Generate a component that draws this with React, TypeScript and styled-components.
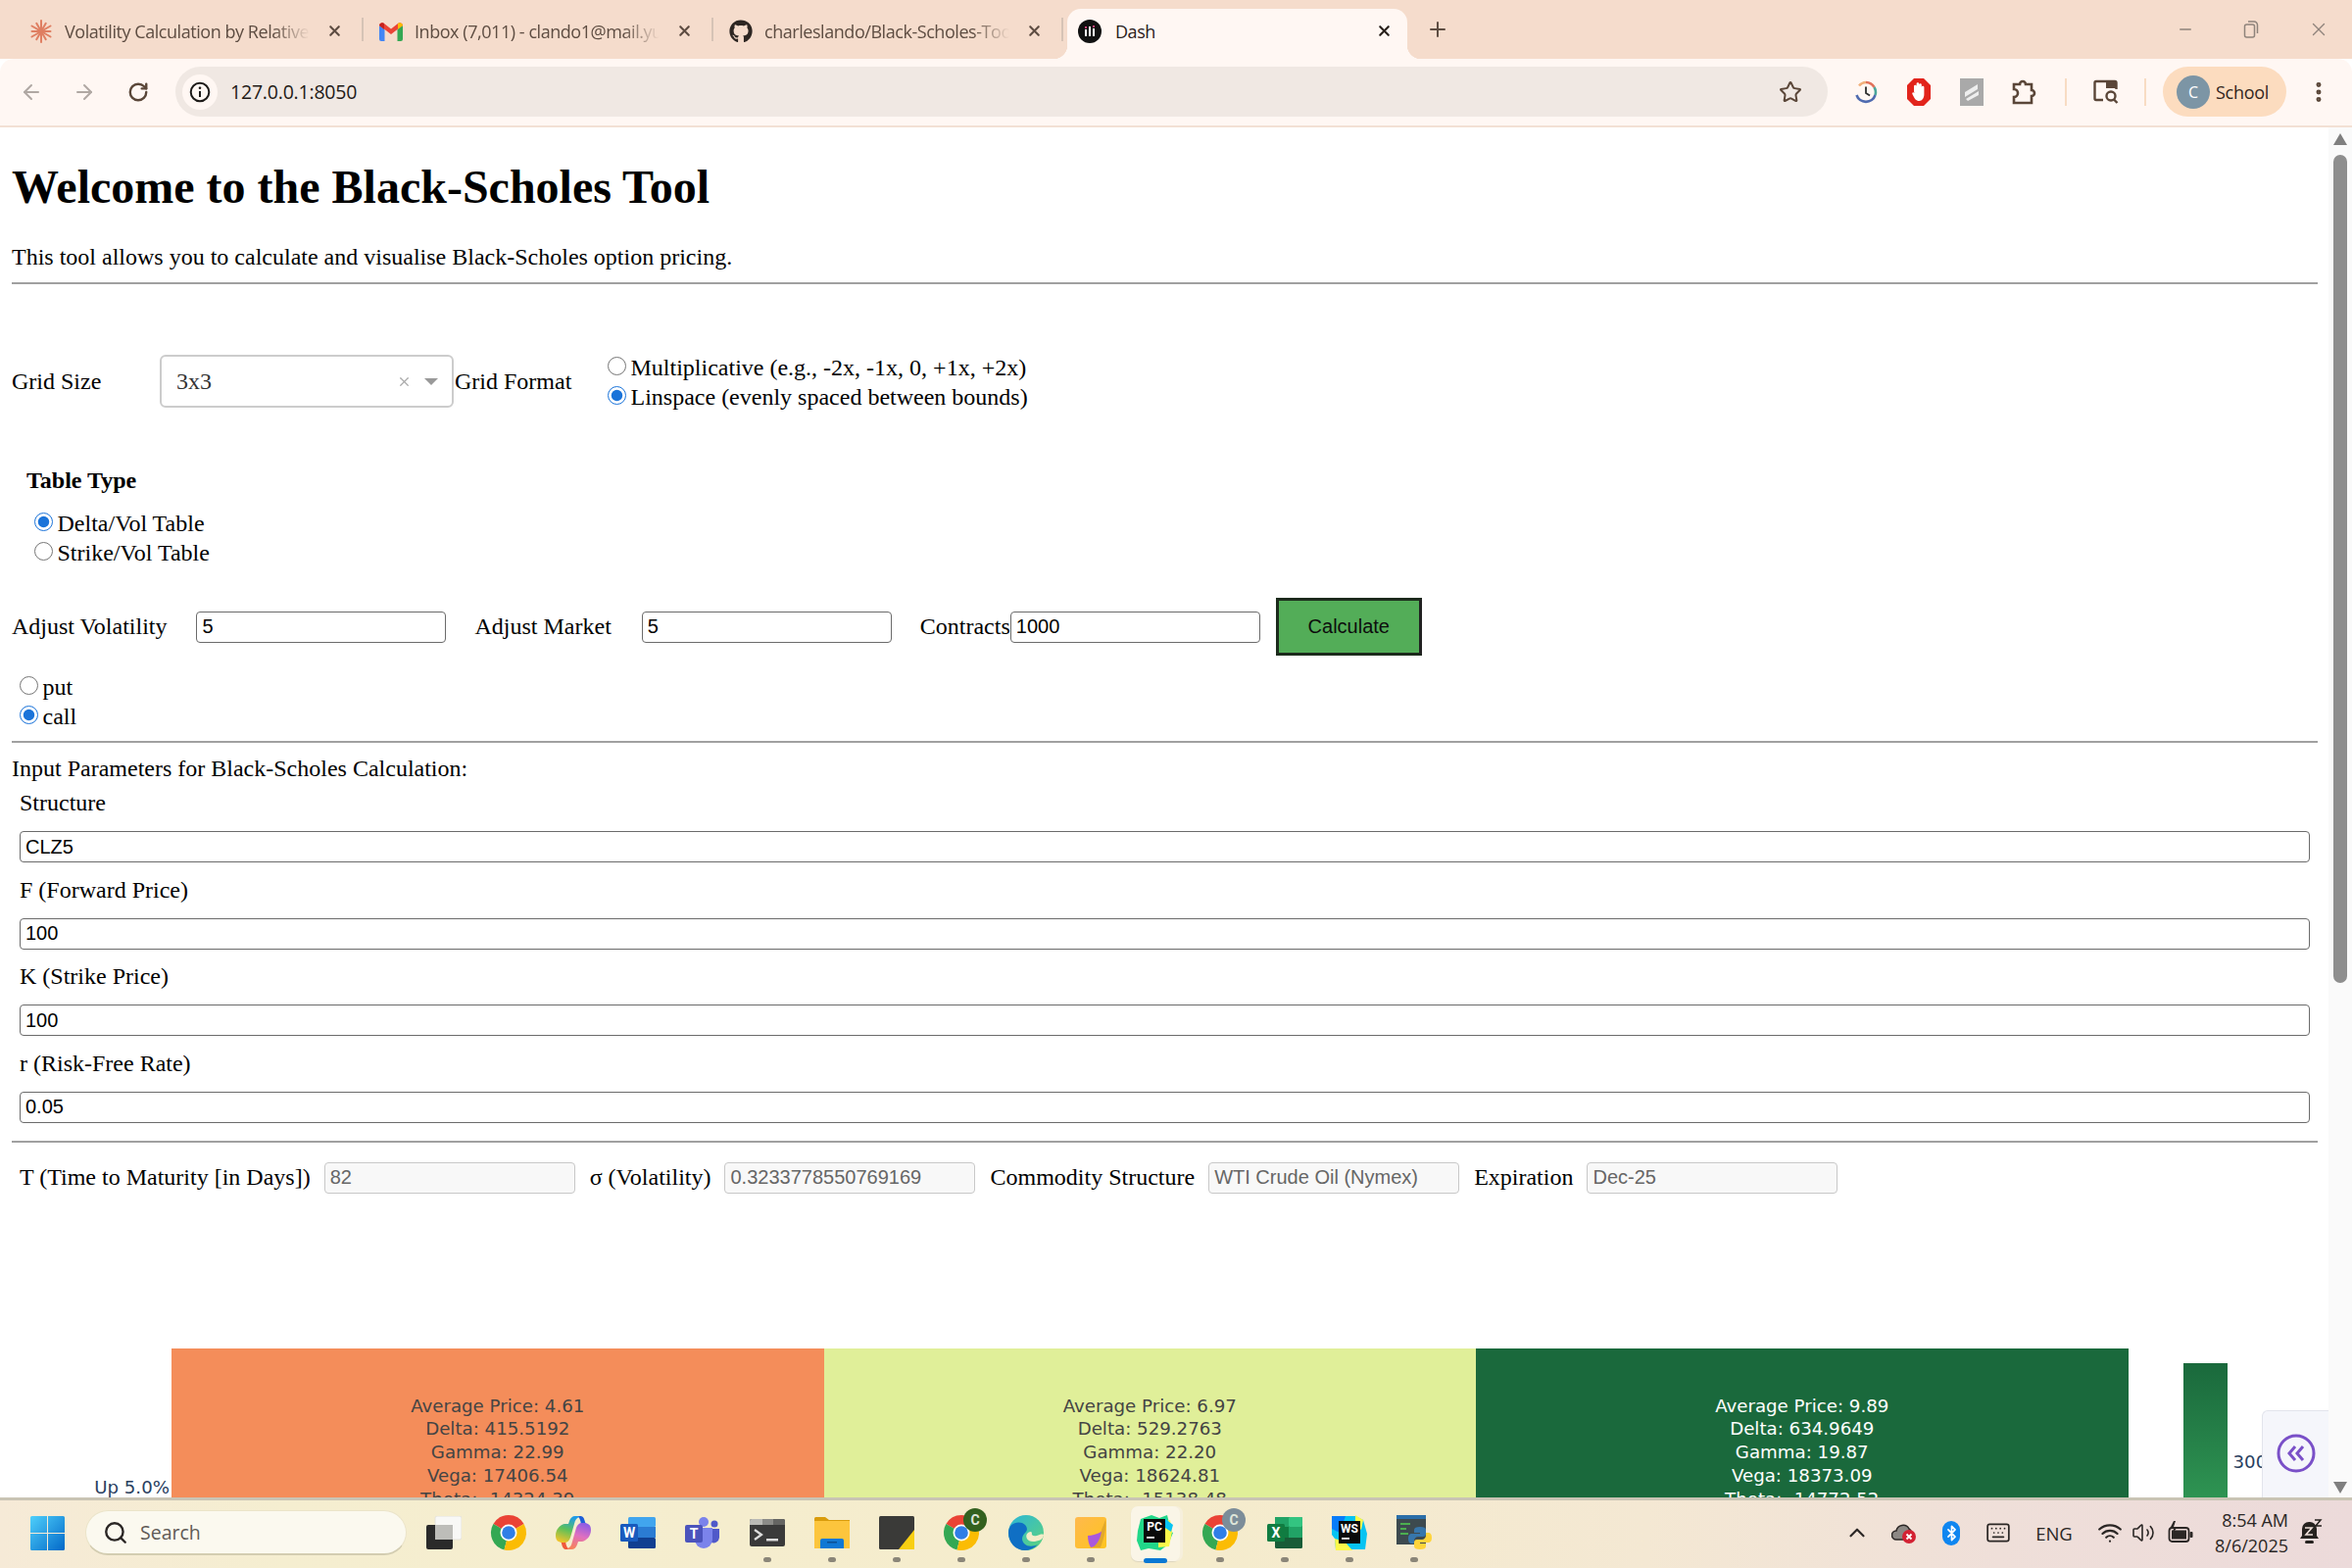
import React from 'react'
import styled, { createGlobalStyle } from 'styled-components'
import {
  ArrowLeft,
  ArrowRight,
  Bluetooth,
  ChevronUp,
  EllipsisVertical,
  Keyboard,
  Minus,
  Plus,
  RotateCw,
  Search,
  Star,
  Volume2,
  Wifi,
  X,
} from 'lucide-react'
import { FaGithub } from 'react-icons/fa'

const GlobalStyle = createGlobalStyle`
  html, body {
    margin: 0;
    padding: 0;
    background: #fff;
  }
  * {
    box-sizing: border-box;
  }
`

const UI_FONT = `"Open Sans", "Noto Sans", sans-serif`
const SERIF = `"Liberation Serif", serif`
const ARIAL = `"Liberation Sans", sans-serif`

const Screen = styled.div`
  width: 2400px;
  height: 1600px;
  display: flex;
  flex-direction: column;
  overflow: hidden;
  background: #fff;
`

/* ---------- browser chrome ---------- */

const TabStrip = styled.div`
  height: 60px;
  flex: none;
  display: flex;
  align-items: flex-end;
  padding-left: 14px;
  background: #f5dccc;
`

const Tab = styled.div<{ $active?: boolean; $divider?: boolean }>`
  position: relative;
  display: flex;
  align-items: center;
  height: ${({ $active }) => ($active ? '51px' : '60px')};
  width: ${({ $active }) => ($active ? '347px' : '357px')};
  margin-left: ${({ $active }) => ($active ? '4px' : '0')};
  padding: ${({ $active }) => ($active ? '0 15px 6px 11px' : '9px 21px 6px 16px')};
  gap: ${({ $active }) => ($active ? '14px' : '12px')};
  font: 18px ${UI_FONT};
  letter-spacing: -0.45px;
  color: ${({ $active }) => ($active ? '#2a211c' : '#5e4d42')};
  background: ${({ $active }) => ($active ? '#fff7f3' : 'transparent')};
  border-radius: 14px 14px 0 0;

  ${({ $divider }) =>
    $divider &&
    `
    &::after {
      content: '';
      position: absolute;
      right: 0;
      top: 18px;
      width: 2px;
      height: 24px;
      background: #d6c3b6;
    }
  `}

  ${({ $active }) =>
    $active &&
    `
    &::before,
    &::after {
      content: '';
      position: absolute;
      bottom: 0;
      width: 14px;
      height: 14px;
    }
    &::before {
      left: -14px;
      background: radial-gradient(circle at 0 0, #f5dccc 14px, #fff7f3 14.5px);
    }
    &::after {
      right: -14px;
      background: radial-gradient(circle at 100% 0, #f5dccc 14px, #fff7f3 14.5px);
    }
  `}
`

const Favicon = styled.span`
  width: 24px;
  height: 24px;
  flex: none;
  display: flex;
  align-items: center;
  justify-content: center;
`

const TabTitle = styled.span<{ $fade?: boolean }>`
  flex: 1;
  min-width: 0;
  white-space: nowrap;
  ${({ $fade }) =>
    $fade &&
    `mask-image: linear-gradient(to right, #000 85%, transparent);`}
`

const TabClose = styled(X)`
  flex: none;
  width: 17px;
  height: 17px;
  margin-left: 5px;
  stroke-width: 3;
`

const NewTab = styled(Plus)`
  width: 24px;
  height: 24px;
  margin: 0 0 18px 19px;
  color: #5e4d42;
  stroke-width: 2;
`

const WindowControls = styled.div`
  margin-left: auto;
  display: flex;
  align-items: center;
  gap: 50px;
  padding: 0 23px 19px 0;
  color: #8f837b;
`

const Toolbar = styled.div`
  height: 70px;
  flex: none;
  display: flex;
  align-items: center;
  background: #fff7f3;
  border-bottom: 2px solid #f3e0d4;
  border-radius: 14px 14px 0 0;
  padding: 0 15px 1px 20px;
  color: #5a4638;
`

const NavButton = styled.span<{ $dim?: boolean }>`
  width: 54px;
  display: flex;
  justify-content: flex-start;
  color: ${({ $dim }) => ($dim ? '#b0a8a3' : '#5a4638')};
`

const ReloadIcon = styled(RotateCw)`
  margin-left: 2px;
`

const Omnibox = styled.div`
  width: 1686px;
  height: 51px;
  flex: none;
  margin-left: -3px;
  display: flex;
  align-items: center;
  padding: 0 26px 0 7px;
  background: #f0e8e3;
  border-radius: 26px;
`

const SiteInfo = styled.span`
  width: 36px;
  height: 36px;
  flex: none;
  display: flex;
  align-items: center;
  justify-content: center;
  background: #fff7f3;
  border-radius: 50%;
`

const Url = styled.span`
  flex: 1;
  margin-left: 13px;
  font: 19.5px ${UI_FONT};
  letter-spacing: -0.2px;
  color: #1f1a17;
`

const Extensions = styled.div`
  display: flex;
  align-items: center;
  margin-left: 12px;
`

const ExtensionSlot = styled.span<{ $width?: number }>`
  width: ${({ $width }) => $width ?? 54}px;
  flex: none;
  display: flex;
  justify-content: center;
`

const ToolbarDivider = styled.span<{ $left?: number }>`
  width: 2px;
  height: 28px;
  flex: none;
  margin-left: ${({ $left }) => $left ?? 0}px;
  background: #f8dcc3;
`

const ProfilePill = styled.div`
  width: 126px;
  height: 51px;
  flex: none;
  margin-left: 17px;
  display: flex;
  align-items: center;
  gap: 6px;
  padding-left: 14px;
  background: #fcdcbf;
  border-radius: 26px;
  font: 18px ${UI_FONT};
  letter-spacing: -0.3px;
  color: #33261d;
`

const Avatar = styled.span`
  width: 34px;
  height: 34px;
  display: flex;
  align-items: center;
  justify-content: center;
  border-radius: 50%;
  background: #7c95a5;
  color: #fff;
  font-size: 16px;
`

const MenuDots = styled(EllipsisVertical)`
  flex: none;
  margin-left: 20px;
  width: 26px;
  height: 26px;
  stroke-width: 2.6;
`

/* ---------- page ---------- */

const Viewport = styled.div`
  position: relative;
  flex: 1;
  min-height: 0;
  display: flex;
  overflow: hidden;
`

const Page = styled.main`
  flex: 1;
  min-width: 0;
  padding: 33px 11px 0 12px;
  font: 24px ${SERIF};
  color: #000;
`

const Title = styled.h1`
  margin: 0 0 31px;
  font-size: 48px;
  line-height: 55px;
  font-weight: bold;
`

const Intro = styled.p`
  margin: 0 0 12px;
  line-height: 27px;
`

const Rule = styled.hr`
  margin: 0;
  height: 2px;
  border: none;
  background: #a0a0a0;
`

const GridRow = styled.div`
  display: flex;
  align-items: center;
  height: 60px;
  margin-top: 69px;
`

const GridLabel = styled.span`
  width: 151px;
`

const SelectBox = styled.div`
  width: 300px;
  height: 54px;
  display: flex;
  align-items: center;
  padding: 0 14px 0 15px;
  border: 2px solid #ccc;
  border-radius: 6px;
  color: #333;
  background: #fff;
`

const SelectValue = styled.span`
  flex: 1;
`

const ClearMark = styled(X)`
  width: 15px;
  height: 15px;
  color: #aaa;
  margin-right: 13px;
`

const Caret = styled.span`
  width: 0;
  height: 0;
  border-left: 7px solid transparent;
  border-right: 7px solid transparent;
  border-top: 7px solid #999;
`

const FormatLabel = styled.span`
  margin-left: 1px;
  width: 156px;
`

const RadioList = styled.div<{ $top?: number; $left?: number; $bottom?: number }>`
  display: flex;
  flex-direction: column;
  margin-top: ${({ $top }) => $top ?? 0}px;
  margin-left: ${({ $left }) => $left ?? 0}px;
  margin-bottom: ${({ $bottom }) => $bottom ?? 0}px;
`

const RadioLine = styled.label`
  display: flex;
  align-items: center;
  height: 30px;
  gap: 4.5px;
`

const Radio = styled.input.attrs({ type: 'radio', readOnly: true })`
  width: 19px;
  height: 19px;
  margin: 0 0 4px;
  accent-color: #1a73d9;
`

const SectionHeading = styled.div`
  margin: 57px 0 0 15px;
  font-weight: bold;
  line-height: 28px;
`

const AdjustRow = styled.div`
  display: flex;
  align-items: center;
  margin-top: 31px;
  height: 59px;
`

const FieldLabel = styled.span<{ $gap?: number; $after?: number }>`
  margin-left: ${({ $gap }) => $gap ?? 0}px;
  margin-right: ${({ $after }) => $after ?? 0}px;
  white-space: nowrap;
`

const NumberInput = styled.input.attrs({ readOnly: true })<{ $muted?: boolean }>`
  width: 256px;
  height: 32px;
  flex: none;
  padding: 0 5px;
  font: 20px ${ARIAL};
  border-radius: 4px;
  outline: none;
  border: 1px solid ${({ $muted }) => ($muted ? '#c8c8c8' : '#6b6b6b')};
  background: ${({ $muted }) => ($muted ? '#f8f8f8' : '#fff')};
  color: ${({ $muted }) => ($muted ? '#666' : '#000')};
`

const AdjustInput = styled(NumberInput)`
  width: 255px;
`

const CalculateButton = styled.button`
  width: 149px;
  height: 59px;
  margin-left: 16px;
  background: #53ad58;
  border: 3px solid #1c2b1c;
  border-right-color: #222;
  font: 20px ${ARIAL};
  color: #0d0d0d;
`

const ParamsHeading = styled.div`
  margin-top: 12px;
  line-height: 28px;
`

const ParamBlock = styled.div`
  padding: 0 8px;
  margin: 7px 0 18px;
  display: flex;
  flex-direction: column;
  gap: 13.5px;
`

const ParamEntry = styled.div`
  display: flex;
  flex-direction: column;
  gap: 15px;
`

const ParamLabel = styled.div`
  height: 28px;
  line-height: 28px;
`

const ParamField = styled(NumberInput)`
  width: 100%;
`

const ReadonlyRow = styled.div`
  display: flex;
  align-items: center;
  height: 32px;
  margin-top: 20px;
  padding-left: 8px;
`

/* ---------- heatmap ---------- */

const Heatmap = styled.section`
  display: flex;
  align-items: flex-start;
  margin: 158px 0 0 -12px;
`

const AxisLabel = styled.div`
  width: 175px;
  height: 284px;
  flex: none;
  display: flex;
  align-items: center;
  justify-content: flex-end;
  padding-right: 2px;
  font: 18.2px "DejaVu Sans", sans-serif;
  color: #2a3f5f;
`

const HeatCell = styled.div<{ $bg: string; $fg: string }>`
  width: 665.5px;
  height: 284px;
  flex: none;
  padding-top: 47px;
  background: ${({ $bg }) => $bg};
  color: ${({ $fg }) => $fg};
  font: 18.2px/23.8px "DejaVu Sans", sans-serif;
  text-align: center;
`

const ColorBar = styled.div`
  width: 45px;
  height: 284px;
  flex: none;
  margin: 15px 0 0 56px;
  background: linear-gradient(#1a693c, #2f9553 50%, #5cb066 100%);
`

const ColorBarTick = styled.span`
  margin: 105px 0 0 6px;
  font: 18.2px "DejaVu Sans", sans-serif;
  color: #2a3f5f;
`

const DebugPanel = styled.div`
  position: absolute;
  right: 24px;
  bottom: 0;
  width: 68px;
  height: 89px;
  display: flex;
  align-items: flex-start;
  justify-content: center;
  padding-top: 23px;
  background: #f5f6fb;
  border: 1px solid #e2e4ec;
  border-bottom: none;
  border-right: none;
  border-radius: 6px 0 0 0;
`

const Scrollbar = styled.div`
  position: relative;
  width: 24px;
  flex: none;
  background: #fafafa;
`

const ScrollThumb = styled.div`
  position: absolute;
  top: 28px;
  left: 5px;
  width: 14px;
  height: 845px;
  border-radius: 7px;
  background: #8e8e8e;
`

const ScrollArrow = styled.div<{ $down?: boolean }>`
  position: absolute;
  left: 5px;
  ${({ $down }) => ($down ? 'bottom: 4px;' : 'top: 6px;')}
  width: 0;
  height: 0;
  border-left: 7px solid transparent;
  border-right: 7px solid transparent;
  ${({ $down }) =>
    $down ? 'border-top: 12px solid #7f7f7f;' : 'border-bottom: 12px solid #7f7f7f;'}
`

/* ---------- taskbar ---------- */

const Taskbar = styled.footer`
  height: 72px;
  flex: none;
  display: flex;
  align-items: center;
  border-top: 3px solid #c9c4b4;
  padding-left: 15px;
  background: linear-gradient(90deg, #f6ead7 0%, #f5eed0 12%, #f5eccc 50%, #f4e8d3 70%, #efdfd9 85%, #ecdada 100%);
  font: 18.5px ${UI_FONT};
  color: #2b2725;
`

const TaskSlot = styled.div<{ $running?: boolean; $active?: boolean }>`
  position: relative;
  width: 66px;
  height: 69px;
  flex: none;
  display: flex;
  align-items: center;
  justify-content: center;
  padding-bottom: 3px;

  ${({ $active }) =>
    $active &&
    `
    &::before {
      content: '';
      position: absolute;
      top: 6px;
      left: 8px;
      width: 50px;
      height: 56px;
      border-radius: 7px;
      background: #faf5e7;
      box-shadow: 3px 0 0 #f6efdc, 0 1px 1px #ddd6bf;
    }
  `}

  ${({ $running, $active }) =>
    $running &&
    `
    &::after {
      content: '';
      position: absolute;
      left: 50%;
      bottom: ${$active ? '5px' : '6px'};
      transform: translateX(-50%);
      width: ${$active ? '24px' : '8px'};
      height: 5px;
      border-radius: 3px;
      background: ${$active ? '#0a78d4' : '#8a8578'};
    }
  `}

  & > svg {
    position: relative;
  }
`

const SearchBox = styled.div`
  width: 328px;
  height: 46px;
  flex: none;
  margin: 0 5px 3px 6px;
  display: flex;
  align-items: center;
  gap: 12px;
  padding-left: 17px;
  font-size: 19.5px;
  background: #fbf9ef;
  border: 1px solid #ebe4c9;
  border-bottom: 2px solid #d3cdb1;
  border-radius: 23px;
  color: #5f5b56;
`

const Tray = styled.div`
  margin-left: auto;
  display: flex;
  align-items: center;
  height: 100%;
  padding: 0 19px 3px 0;
`

const TraySlot = styled.span<{ $width: number }>`
  width: ${({ $width }) => $width}px;
  flex: none;
  display: flex;
  align-items: center;
  justify-content: center;
`

const BluetoothBadge = styled.span`
  width: 18px;
  height: 25px;
  display: flex;
  align-items: center;
  justify-content: center;
  border-radius: 9px;
  background: #0f86f0;
  color: #fff;
`

const Clock = styled.div`
  width: 90px;
  flex: none;
  text-align: right;
  white-space: nowrap;
  line-height: 26px;
  font-size: 18px;
`

/* ---------- icons ---------- */

const SparkIcon = () => (
  <svg width="24" height="24" viewBox="0 0 24 24" stroke="#df7f62" strokeWidth="2" strokeLinecap="round">
    {[0, 30, 60, 90, 120, 150, 180, 210, 240, 270, 300, 330].map(a => (
      <line key={a} x1="12" y1="12" x2="12" y2={a % 60 === 0 ? 1 : 2.5} transform={`rotate(${a} 12 12)`} />
    ))}
  </svg>
)

const GmailIcon = () => (
  <svg width="24" height="20" viewBox="0 0 24 20">
    <path d="M0 4v14a2 2 0 0 0 2 2h3.5V8z" fill="#4285f4" />
    <path d="M24 4v14a2 2 0 0 1-2 2h-3.5V8z" fill="#34a853" />
    <path d="M0 4l5.5 4L12 13l6.500-5L24 4a3 3 0 0 0-5-2l-7 5.500L5 2A3 3 0 0 0 0 4z" fill="#ea4335" />
    <path d="M18.500 8L24 4a3 3 0 0 0-5-2v6z" fill="#fbbc04" />
    <path d="M0 4a3 3 0 0 1 5-2v6z" fill="#c5221f" />
  </svg>
)

const DashIcon = () => (
  <svg width="24" height="24" viewBox="0 0 24 24">
    <circle cx="12" cy="12" r="12" fill="#111" />
    <path d="M7 10h2v7H7zM11 7h2v10h-2zM15 9h2v8h-2z" fill="#fff" />
    <path d="M7 7h2v2H7zM15 6h2v2h-2z" fill="#e0457b" />
  </svg>
)

const InfoIcon = () => (
  <svg width="22" height="22" viewBox="0 0 22 22" fill="none">
    <circle cx="11" cy="11" r="9.300" stroke="#1d1a18" strokeWidth="2" />
    <path d="M11 10v6" stroke="#1d1a18" strokeWidth="2" />
    <circle cx="11" cy="6.800" r="1.300" fill="#1d1a18" />
  </svg>
)

const RestoreIcon = () => (
  <svg width="16" height="18" viewBox="0 0 16 18" fill="none" stroke="#8f837b" strokeWidth="1.500">
    <rect x="1.500" y="4" width="10" height="13" rx="2" />
    <path d="M5 1h6a3.500 3.500 0 0 1 3.500 3.500V13" />
  </svg>
)

const HistoryIcon = () => (
  <svg width="24" height="24" viewBox="0 0 24 24" fill="none" strokeWidth="2.600">
    <path d="M5 5.500A10 10 0 0 1 12 2" stroke="#f1b07b" />
    <path d="M12 2a10 10 0 0 1 8.500 5" stroke="#e2715a" />
    <path d="M20.500 7a10 10 0 0 1 1 8" stroke="#4aa69b" />
    <path d="M21.500 15a10 10 0 0 1-19 0" stroke="#4f6bb0" />
    <path d="M12 6.500V13l4 2.500" stroke="#2d2d2d" strokeWidth="1.800" />
  </svg>
)

const StopHandIcon = () => (
  <svg width="24" height="28" viewBox="0 0 24 28">
    <path d="M7 0h10l7 7v14l-7 7H7l-7-7V7z" fill="#e2241c" />
    <path d="M7 13V8a1.300 1.300 0 0 1 2.600 0v3V5.500a1.300 1.300 0 0 1 2.600 0V11V6.500a1.300 1.300 0 0 1 2.600 0V12 9a1.300 1.300 0 0 1 2.600 0v7c0 4-2 7-5 7-3.500 0-4.500-2-7-7-.7-1.500 1-2.500 2-1z" fill="#fff" />
  </svg>
)

const StripeIcon = () => (
  <svg width="24" height="28" viewBox="0 0 24 28">
    <rect width="24" height="28" fill="#a9a9a9" />
    <path d="M5 14L18 6v5L5 19zM6 21l13-8v4L8 23z" fill="#eee" />
  </svg>
)

const PuzzleIcon = () => (
  <svg width="26" height="28" viewBox="0 0 26 28" fill="none" stroke="#5a4638" strokeWidth="2.600">
    <path d="M2 6h6a3 3 0 0 1 6 0h6v6a2.500 2.500 0 0 1 0 6v7H2v-6a4 4 0 0 0 0-8z" />
  </svg>
)

const SidePanelIcon = () => (
  <svg width="26" height="26" viewBox="0 0 26 26" fill="none" stroke="#5a4638" strokeWidth="2.400">
    <path d="M10 21H3a1.500 1.500 0 0 1-1.500-1.500v-16A1.500 1.500 0 0 1 3 2h19a1.500 1.500 0 0 1 1.500 1.500V10" />
    <path d="M13 2h11v7H13z" fill="#5a4638" stroke="none" />
    <circle cx="18" cy="17" r="4.500" />
    <path d="M21 20.500l3.500 3.500" />
  </svg>
)

const WindowsLogo = () => (
  <svg width="35" height="35" viewBox="0 0 35 35">
    <defs>
      <linearGradient id="win" x1="0" y1="0" x2="1" y2="1">
        <stop offset="0" stopColor="#4fd0fb" />
        <stop offset="1" stopColor="#0268c8" />
      </linearGradient>
    </defs>
    <path d="M0 1.500A1.500 1.500 0 0 1 1.500 0H17v17H0zM18 0h15.500A1.500 1.500 0 0 1 35 1.500V17H18zM0 18h17v17H1.500A1.500 1.500 0 0 1 0 33.500zM18 18h17v15.500a1.500 1.500 0 0 1-1.500 1.500H18z" fill="url(#win)" />
  </svg>
)

const TaskViewIcon = () => (
  <svg width="36" height="34" viewBox="0 0 36 34">
    <rect x="9" y="0" width="27" height="24" rx="2" fill="#f8f8f6" stroke="#e4e2da" />
    <rect x="0" y="9" width="27" height="25" rx="2" fill="#2a2a2a" />
    <rect x="9" y="9" width="18" height="15" fill="#bdbdb9" />
  </svg>
)

const ChromeIcon = ({ badge }: { badge?: string }) => (
  <svg width="36" height="36" viewBox="0 0 36 36" overflow="visible">
    <path d="M18 18L2.400 9A18 18 0 0 1 33.600 9z" fill="#ea4335" />
    <path d="M18 18L2.400 9A18 18 0 0 0 13.500 35.500z" fill="#34a853" />
    <path d="M18 18L13.500 35.500A18 18 0 0 0 33.600 9z" fill="#fbbc04" />
    <circle cx="18" cy="18" r="8.500" fill="#fff" />
    <circle cx="18" cy="18" r="6.800" fill="#2f7ee6" />
    {badge && (
      <>
        <circle cx="32" cy="5" r="12" fill={badge} />
        <text x="32" y="10" fontSize="14" fontWeight="700" textAnchor="middle" fill="#dfe6da" fontFamily="Roboto, sans-serif">
          C
        </text>
      </>
    )}
  </svg>
)

const COPILOT_RIBBON =
  'M23 1H20C17 1 15 3 14 6L13 9H9C4 10 0 15 0 21C0 26 3 28 7 28H9C12 28 14 26 15 23L19 9C20 5 21 3 24 2Z'

const CopilotIcon = () => (
  <svg width="36" height="36" viewBox="0 0 36 36">
    <defs>
      <linearGradient id="cop1" x1="0.6" y1="0" x2="0.3" y2="1">
        <stop offset="0" stopColor="#1e9be8" />
        <stop offset="0.5" stopColor="#5cc05a" />
        <stop offset="1" stopColor="#f2c42a" />
      </linearGradient>
      <linearGradient id="cop2" x1="0.6" y1="0" x2="0.3" y2="1">
        <stop offset="0" stopColor="#f6825c" />
        <stop offset="0.5" stopColor="#e070c0" />
        <stop offset="1" stopColor="#8a5be6" />
      </linearGradient>
    </defs>
    <path d="M22 1h3c3 0 4 2 5 6l1 3c-2 0-4 0-5 2 0-5-1-9-4-11z" fill="#1e5fd8" />
    <path d="M14 35h-3c-3 0-4-2-5-6l-1-3c2 0 4 0 5-2 0 5 1 9 4 11z" fill="#f05a3c" />
    <path d={COPILOT_RIBBON} fill="url(#cop1)" />
    <path d={COPILOT_RIBBON} fill="url(#cop2)" transform="rotate(180 18 18)" />
  </svg>
)

const WordIcon = () => (
  <svg width="36" height="32" viewBox="0 0 36 32">
    <rect x="8" y="0" width="28" height="10" rx="1.500" fill="#41a5ee" />
    <rect x="8" y="10" width="28" height="11" fill="#2b7cd3" />
    <rect x="8" y="21" width="28" height="11" rx="1.500" fill="#103f91" />
    <rect x="0" y="7" width="18" height="18" rx="1.500" fill="#185abd" />
    <text x="9" y="21" fontSize="14" fontWeight="700" textAnchor="middle" fill="#fff" fontFamily="Roboto, sans-serif">W</text>
  </svg>
)

const TeamsIcon = () => (
  <svg width="36" height="32" viewBox="0 0 36 32">
    <circle cx="19" cy="5" r="5" fill="#7b83eb" />
    <circle cx="30" cy="7" r="3.500" fill="#5059c9" />
    <path d="M25 12h10v9a6 6 0 0 1-8 5z" fill="#5059c9" />
    <path d="M10 11h18v12a9 9 0 0 1-18 0z" fill="#7b83eb" />
    <rect x="0" y="8" width="18" height="18" rx="2" fill="#4b53bc" />
    <text x="9" y="22" fontSize="14" fontWeight="700" textAnchor="middle" fill="#fff" fontFamily="Roboto, sans-serif">T</text>
  </svg>
)

const TerminalIcon = () => (
  <svg width="36" height="28" viewBox="0 0 36 28">
    <rect width="36" height="28" rx="2" fill="#3a3a3a" />
    <path d="M0 2a2 2 0 0 1 2-2h11v6H0z" fill="#b9b9b5" />
    <rect x="13" y="0" width="11" height="6" fill="#8b8b88" />
    <path d="M24 0h10a2 2 0 0 1 2 2v4H24z" fill="#656563" />
    <path d="M5 11l7 5-7 5" fill="none" stroke="#ddd" strokeWidth="2.200" />
    <rect x="17" y="20" width="12" height="2.500" fill="#ddd" />
  </svg>
)

const ExplorerIcon = () => (
  <svg width="36" height="32" viewBox="0 0 36 32">
    <path d="M0 1.500A1.500 1.500 0 0 1 1.500 0H11l4 3h21v6H0z" fill="#d99c0c" />
    <path d="M0 4h36v28H0z" fill="#fcc53d" />
    <path d="M6 24a2 2 0 0 1 2-2h20a2 2 0 0 1 2 2v8H6z" fill="#0f78d4" />
    <rect x="13" y="25" width="10" height="1.500" fill="#0a4f93" />
  </svg>
)

const StickyIcon = () => (
  <svg width="36" height="34" viewBox="0 0 36 34">
    <rect width="36" height="34" rx="1.500" fill="#3a3a38" />
    <path d="M36 14v20H20z" fill="#f8cf12" />
  </svg>
)

const EdgeIcon = () => (
  <svg width="36" height="36" viewBox="0 0 36 36">
    <defs>
      <linearGradient id="edgeTop" x1="0" y1="0" x2="1" y2="1">
        <stop offset="0" stopColor="#2bb6d8" />
        <stop offset="1" stopColor="#5fd47a" />
      </linearGradient>
    </defs>
    <circle cx="18" cy="18" r="18" fill="url(#edgeTop)" />
    <path d="M0 18C0 9 8 6 14 8c5 2 6 7 4 9-3 3-6 7-2 12 4 4 10 3 14 1-4 4-9 6-13 6C7 36 0 28 0 18z" fill="#0f6fc4" />
    <path d="M36 20c0 5-6 7-11 7-6 0-8-5-6-8 2-2 4-3 5-1-1 2 1 4 5 3 3-1 5-2 7-1z" fill="#f4ecc9" />
  </svg>
)

const NotesIcon = () => (
  <svg width="32" height="32" viewBox="0 0 32 32">
    <defs>
      <linearGradient id="notes" x1="0" y1="0" x2="1" y2="1">
        <stop offset="0" stopColor="#ffb94d" />
        <stop offset="1" stopColor="#fdc41e" />
      </linearGradient>
    </defs>
    <rect width="32" height="32" rx="3" fill="url(#notes)" />
    <path d="M31 3c-1 6-2 11-6 13-3 1.500-8 3-12 3 0 4 1 9 3 12 8-1 12-6 13-13z" fill="#a958dc" />
    <path d="M31 3c1 9-1 17-5 28h-8c7-5 9-14 9-18z" fill="#e2a82a" />
  </svg>
)

const PyCharmIcon = () => (
  <svg width="38" height="36" viewBox="0 0 38 36">
    <path d="M4 4L15 0l8 3 8-3 2 8-4 6 8 4-5 12-8 6-12-2-8 2-4-10 1-10z" fill="#21d789" />
    <path d="M22 8l12-3 2 12-3 15-11 1z" fill="#fcf84a" />
    <path d="M28 3l9 7-2 7-6-4z" fill="#07c3f2" />
    <rect x="7" y="4" width="22" height="24" fill="#0a0a0a" />
    <text x="18" y="16" fontSize="12" fontWeight="700" textAnchor="middle" fill="#fff" fontFamily="Roboto, sans-serif">PC</text>
    <rect x="10" y="22" width="8" height="1.800" fill="#fff" />
  </svg>
)

const ExcelIcon = () => (
  <svg width="36" height="32" viewBox="0 0 36 32">
    <rect x="8" y="0" width="28" height="32" rx="1.500" fill="#185c37" />
    <rect x="8" y="0" width="14" height="10" fill="#21a366" />
    <rect x="22" y="0" width="14" height="10" rx="1" fill="#33c481" />
    <rect x="22" y="10" width="14" height="11" fill="#21a366" />
    <rect x="8" y="10" width="14" height="11" fill="#107c41" />
    <rect x="0" y="7" width="18" height="18" rx="1.500" fill="#107c41" />
    <text x="9" y="21" fontSize="14" fontWeight="700" textAnchor="middle" fill="#fff" fontFamily="Roboto, sans-serif">X</text>
  </svg>
)

const WebStormIcon = () => (
  <svg width="36" height="36" viewBox="0 0 36 36">
    <path d="M0 1h24l8 4 4 14-2 16H4L3 24 0 20z" fill="#07c3f2" />
    <path d="M0 1h14L8 18 0 14z" fill="#087cfa" />
    <path d="M3 24l10 3 8 9H4z" fill="#fcf84a" />
    <path d="M24 0l8 5-2 10-6-5z" fill="#fcf84a" />
    <rect x="7" y="6" width="22" height="23" fill="#0a0a0a" />
    <text x="18" y="18" fontSize="12" fontWeight="700" textAnchor="middle" fill="#fff" fontFamily="Roboto, sans-serif">WS</text>
    <rect x="10" y="23" width="8" height="1.800" fill="#fff" />
  </svg>
)

const PythonToolIcon = () => (
  <svg width="36" height="36" viewBox="0 0 36 36">
    <rect x="0" y="0" width="30" height="30" fill="#3d4a4f" />
    <rect x="0" y="0" width="30" height="4" fill="#2b6ea8" />
    <path d="M4 9h10M4 14h6M4 19h8" stroke="#4caf50" strokeWidth="1.800" />
    <path d="M24 12c-4 0-6 1-6 3v3h6v1h-8c-3 0-4 2-4 5s1 5 4 5h2v-3c0-2 2-4 4-4h5c2 0 3-1 3-3v-4c0-2-2-3-6-3z" fill="#3776ab" />
    <path d="M24 35c4 0 6-1 6-3v-3h-6v-1h8c3 0 4-2 4-5s-1-5-4-5h-2v3c0 2-2 4-4 4h-5c-2 0-3 1-3 3v4c0 2 2 3 6 3z" fill="#ffd43b" />
  </svg>
)

const CloudAlertIcon = () => (
  <svg width="26" height="24" viewBox="0 0 26 24">
    <path d="M5 19a4.500 4.500 0 0 1 0-9 7 7 0 0 1 13-2 5 5 0 0 1 2 6v5z" fill="#8c8884" stroke="#2b2725" strokeWidth="1.500" />
    <circle cx="18" cy="16" r="7" fill="#d32233" />
    <path d="M15.500 13.500l5 5M20.500 13.500l-5 5" stroke="#fff" strokeWidth="1.800" />
  </svg>
)

const BatteryIcon = () => (
  <svg width="26" height="24" viewBox="0 0 26 24" fill="none">
    <rect x="1.500" y="7" width="20" height="14" rx="3" stroke="#2b2725" strokeWidth="1.800" />
    <rect x="4" y="9.500" width="15" height="9" fill="#2b2725" />
    <rect x="22.500" y="11" width="3" height="6" rx="1" fill="#2b2725" />
    <path d="M6 0L2 8h4l-2 6 6-8H6l2-6z" fill="#2b2725" />
  </svg>
)

const SleepBellIcon = () => (
  <svg width="24" height="28" viewBox="0 0 24 28">
    <path d="M10 3a7 7 0 0 0-7 7v7l-2 3h19l-2-3v-7a7 7 0 0 0-8-7z" fill="#26221f" />
    <rect x="6" y="22" width="9" height="3" rx="1.500" fill="#26221f" />
    <path d="M6 9h7l-6 7h7" fill="none" stroke="#f1e2dc" strokeWidth="1.600" />
    <path d="M16 1h6l-5 6h6" fill="none" stroke="#26221f" strokeWidth="1.500" />
  </svg>
)

const DevToolsIcon = () => (
  <svg width="40" height="40" viewBox="0 0 40 40" fill="none" stroke="#7a50c8" strokeWidth="3">
    <circle cx="20" cy="20" r="18" />
    <path d="M19 13l-6 7 6 7M27 13l-6 7 6 7" />
  </svg>
)

/* ---------- data ---------- */

const tabs = [
  { icon: <SparkIcon />, title: 'Volatility Calculation by Relative' },
  { icon: <GmailIcon />, title: 'Inbox (7,011) - clando1@mail.yu' },
  { icon: <FaGithub size={24} color="#2d2622" />, title: 'charleslando/Black-Scholes-Too' },
]

const params = [
  { label: 'Structure', value: 'CLZ5' },
  { label: 'F (Forward Price)', value: '100' },
  { label: 'K (Strike Price)', value: '100' },
  { label: 'r (Risk-Free Rate)', value: '0.05' },
]

const readonlyFields = [
  { label: 'T (Time to Maturity [in Days])', value: '82' },
  { label: 'σ (Volatility)', value: '0.3233778550769169' },
  { label: 'Commodity Structure', value: 'WTI Crude Oil (Nymex)' },
  { label: 'Expiration', value: 'Dec-25' },
]

const cells = [
  { bg: '#f48d5a', fg: '#444', lines: ['Average Price: 4.61', 'Delta: 415.5192', 'Gamma: 22.99', 'Vega: 17406.54', 'Theta: -14324.39'] },
  { bg: '#e0ef99', fg: '#444', lines: ['Average Price: 6.97', 'Delta: 529.2763', 'Gamma: 22.20', 'Vega: 18624.81', 'Theta: -15138.48'] },
  { bg: '#1a693c', fg: '#fff', lines: ['Average Price: 9.89', 'Delta: 634.9649', 'Gamma: 19.87', 'Vega: 18373.09', 'Theta: -14772.52'] },
]

const taskItems = [
  { key: 'taskview', icon: <TaskViewIcon /> },
  { key: 'chrome', icon: <ChromeIcon /> },
  { key: 'copilot', icon: <CopilotIcon /> },
  { key: 'word', icon: <WordIcon /> },
  { key: 'teams', icon: <TeamsIcon /> },
  { key: 'terminal', icon: <TerminalIcon />, running: true },
  { key: 'explorer', icon: <ExplorerIcon />, running: true },
  { key: 'sticky', icon: <StickyIcon />, running: true },
  { key: 'chrome-c', icon: <ChromeIcon badge="#33611f" />, running: true },
  { key: 'edge', icon: <EdgeIcon />, running: true },
  { key: 'notes', icon: <NotesIcon />, running: true },
  { key: 'pycharm', icon: <PyCharmIcon />, running: true, active: true },
  { key: 'chrome-s', icon: <ChromeIcon badge="#7c8d99" />, running: true },
  { key: 'excel', icon: <ExcelIcon />, running: true },
  { key: 'webstorm', icon: <WebStormIcon />, running: true },
  { key: 'python', icon: <PythonToolIcon />, running: true },
]

const App = () => {
  return (
    <Screen>
      <GlobalStyle />
      <TabStrip>
        {tabs.map(tab => (
          <Tab key={tab.title} $divider>
            <Favicon>{tab.icon}</Favicon>
            <TabTitle $fade>{tab.title}</TabTitle>
            <TabClose />
          </Tab>
        ))}
        <Tab $active>
          <Favicon>
            <DashIcon />
          </Favicon>
          <TabTitle>Dash</TabTitle>
          <TabClose />
        </Tab>
        <NewTab />
        <WindowControls>
          <Minus size={18} />
          <RestoreIcon />
          <X size={22} strokeWidth={1.5} />
        </WindowControls>
      </TabStrip>

      <Toolbar>
        <NavButton $dim>
          <ArrowLeft size={24} />
        </NavButton>
        <NavButton $dim>
          <ArrowRight size={24} />
        </NavButton>
        <NavButton>
          <ReloadIcon size={22} strokeWidth={2.6} />
        </NavButton>
        <Omnibox>
          <SiteInfo>
            <InfoIcon />
          </SiteInfo>
          <Url>127.0.0.1:8050</Url>
          <Star size={24} strokeWidth={2} />
        </Omnibox>
        <Extensions>
          <ExtensionSlot>
            <HistoryIcon />
          </ExtensionSlot>
          <ExtensionSlot>
            <StopHandIcon />
          </ExtensionSlot>
          <ExtensionSlot>
            <StripeIcon />
          </ExtensionSlot>
          <ExtensionSlot>
            <PuzzleIcon />
          </ExtensionSlot>
          <ToolbarDivider $left={14} />
          <ExtensionSlot $width={79}>
            <SidePanelIcon />
          </ExtensionSlot>
          <ToolbarDivider />
        </Extensions>
        <ProfilePill>
          <Avatar>C</Avatar>
          School
        </ProfilePill>
        <MenuDots />
      </Toolbar>

      <Viewport>
        <Page>
          <Title>Welcome to the Black-Scholes Tool</Title>
          <Intro>This tool allows you to calculate and visualise Black-Scholes option pricing.</Intro>
          <Rule />

          <GridRow>
            <GridLabel>Grid Size</GridLabel>
            <SelectBox>
              <SelectValue>3x3</SelectValue>
              <ClearMark />
              <Caret />
            </SelectBox>
            <FormatLabel>Grid Format</FormatLabel>
            <RadioList $top={3}>
              <RadioLine>
                <Radio name="format" />
                Multiplicative (e.g., -2x, -1x, 0, +1x, +2x)
              </RadioLine>
              <RadioLine>
                <Radio name="format" defaultChecked />
                Linspace (evenly spaced between bounds)
              </RadioLine>
            </RadioList>
          </GridRow>

          <SectionHeading>Table Type</SectionHeading>
          <RadioList $top={15} $left={23}>
            <RadioLine>
              <Radio name="table" defaultChecked />
              Delta/Vol Table
            </RadioLine>
            <RadioLine>
              <Radio name="table" />
              Strike/Vol Table
            </RadioLine>
          </RadioList>

          <AdjustRow>
            <FieldLabel $after={30}>Adjust Volatility</FieldLabel>
            <AdjustInput defaultValue="5" />
            <FieldLabel $gap={29} $after={31}>
              Adjust Market
            </FieldLabel>
            <AdjustInput defaultValue="5" />
            <FieldLabel $gap={29}>Contracts</FieldLabel>
            <AdjustInput defaultValue="1000" />
            <CalculateButton>Calculate</CalculateButton>
          </AdjustRow>

          <RadioList $top={17} $left={8} $bottom={10}>
            <RadioLine>
              <Radio name="kind" />
              put
            </RadioLine>
            <RadioLine>
              <Radio name="kind" defaultChecked />
              call
            </RadioLine>
          </RadioList>
          <Rule />

          <ParamsHeading>Input Parameters for Black-Scholes Calculation:</ParamsHeading>
          <ParamBlock>
            {params.map(param => (
              <ParamEntry key={param.label}>
                <ParamLabel>{param.label}</ParamLabel>
                <ParamField defaultValue={param.value} />
              </ParamEntry>
            ))}
          </ParamBlock>
          <Rule />

          <ReadonlyRow>
            {readonlyFields.map((field, i) => (
              <React.Fragment key={field.label}>
                <FieldLabel $gap={i === 0 ? 0 : 15} $after={14}>
                  {field.label}
                </FieldLabel>
                <NumberInput $muted defaultValue={field.value} />
              </React.Fragment>
            ))}
          </ReadonlyRow>

          <Heatmap>
            <AxisLabel>Up 5.0%</AxisLabel>
            {cells.map(cell => (
              <HeatCell key={cell.bg} $bg={cell.bg} $fg={cell.fg}>
                {cell.lines.map(line => (
                  <div key={line}>{line}</div>
                ))}
              </HeatCell>
            ))}
            <ColorBar />
            <ColorBarTick>300</ColorBarTick>
          </Heatmap>
        </Page>

        <Scrollbar>
          <ScrollArrow />
          <ScrollThumb />
          <ScrollArrow $down />
        </Scrollbar>
        <DebugPanel>
          <DevToolsIcon />
        </DebugPanel>
      </Viewport>

      <Taskbar>
        <TaskSlot>
          <WindowsLogo />
        </TaskSlot>
        <SearchBox>
          <Search size={26} strokeWidth={2.2} color="#2b2725" />
          Search
        </SearchBox>
        {taskItems.map(item => (
          <TaskSlot key={item.key} $running={item.running} $active={item.active}>
            {item.icon}
          </TaskSlot>
        ))}
        <Tray>
          <TraySlot $width={64}>
            <ChevronUp size={26} strokeWidth={2} />
          </TraySlot>
          <TraySlot $width={32}>
            <CloudAlertIcon />
          </TraySlot>
          <TraySlot $width={64}>
            <BluetoothBadge>
              <Bluetooth size={17} strokeWidth={2.4} />
            </BluetoothBadge>
          </TraySlot>
          <TraySlot $width={32}>
            <Keyboard size={26} strokeWidth={1.6} />
          </TraySlot>
          <TraySlot $width={82}>ENG</TraySlot>
          <TraySlot $width={32}>
            <Wifi size={26} strokeWidth={2} />
          </TraySlot>
          <TraySlot $width={36}>
            <Volume2 size={24} strokeWidth={1.6} />
          </TraySlot>
          <TraySlot $width={40}>
            <BatteryIcon />
          </TraySlot>
          <Clock>
            8:54 AM
            <br />
            8/6/2025
          </Clock>
          <TraySlot $width={46}>
            <SleepBellIcon />
          </TraySlot>
        </Tray>
      </Taskbar>
    </Screen>
  )
}

export default App
